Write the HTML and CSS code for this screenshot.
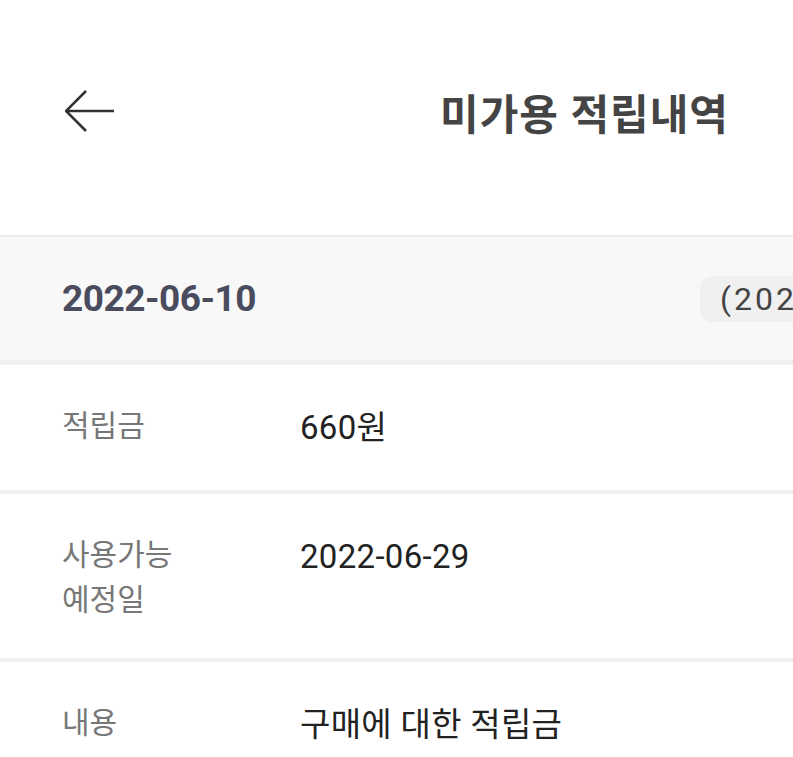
FILE: index.html
```html
<!DOCTYPE html>
<html lang="ko">
<head>
    <meta charset="UTF-8">
    <meta name="viewport" content="width=device-width, initial-scale=1.0">
    <title>미가용 적립내역</title>
    <link rel="stylesheet" href="styles.css">
</head>
<body>
    <header class="top-bar">
        <a class="back-btn" href="#" aria-label="뒤로">
            <svg width="50" height="44" viewBox="0 0 50 44">
                <path d="M49 21H2M21 1L1 21L21 41" fill="none" stroke="#333" stroke-width="2.6"/>
            </svg>
        </a>
        <h1 class="page-title">미가용 적립내역</h1>
    </header>

    <section class="date-bar">
        <div class="date">2022-06-10</div>
        <div class="badge">(2022-06-29 사용가능)</div>
    </section>

    <div class="row">
        <div class="label">적립금</div>
        <div class="value">660원</div>
    </div>
    <div class="row">
        <div class="label">사용가능<br>예정일</div>
        <div class="value">2022-06-29</div>
    </div>
    <div class="row">
        <div class="label">내용</div>
        <div class="value">구매에 대한 적립금</div>
    </div>
</body>
</html>
```

FILE: styles.css
```css
body {
    margin: 0;
    padding: 0;
    background: #fff;
    font-family: Roboto, "Noto Sans CJK KR", sans-serif;
    overflow: hidden;
}

/* 상단 헤더 */
.top-bar {
    height: 235px;
    display: flex;
    align-items: center;
    justify-content: space-between;
    padding: 0 64px 12px 65px;
    box-sizing: border-box;
}

.back-btn {
    display: flex;
}

.page-title {
    margin: 0;
    font-size: 42px;
    font-weight: 700;
    color: #444;
    letter-spacing: 1px;
}

/* 날짜 구분 */
.date-bar {
    display: flex;
    align-items: center;
    height: 123px;
    padding-left: 62px;
    background: #f8f8f8;
    border-top: 2px solid #ececec;
    border-bottom: 5px solid #efefef;
    white-space: nowrap;
}

.date {
    width: 638px;
    flex-shrink: 0;
    font-size: 37px;
    font-weight: 700;
    letter-spacing: -0.5px;
    color: #4a4c5e;
}

.badge {
    flex-shrink: 0;
    height: 46px;
    line-height: 46px;
    padding: 0 20px;
    border-radius: 12px;
    background: #f0f0f0;
    font-size: 32px;
    letter-spacing: 3px;
    color: #444;
}

/* 상세 항목 */
.row {
    display: flex;
    align-items: flex-start;
    padding: 36px 0 36px 62px;
    border-bottom: 4px solid #efefef;
}

.label {
    width: 238px;
    flex-shrink: 0;
    padding-top: 2px;
    font-size: 30px;
    line-height: 45px;
    color: #777;
}

.value {
    font-size: 33px;
    line-height: 53px;
    letter-spacing: 0.3px;
    color: #222;
}
```
